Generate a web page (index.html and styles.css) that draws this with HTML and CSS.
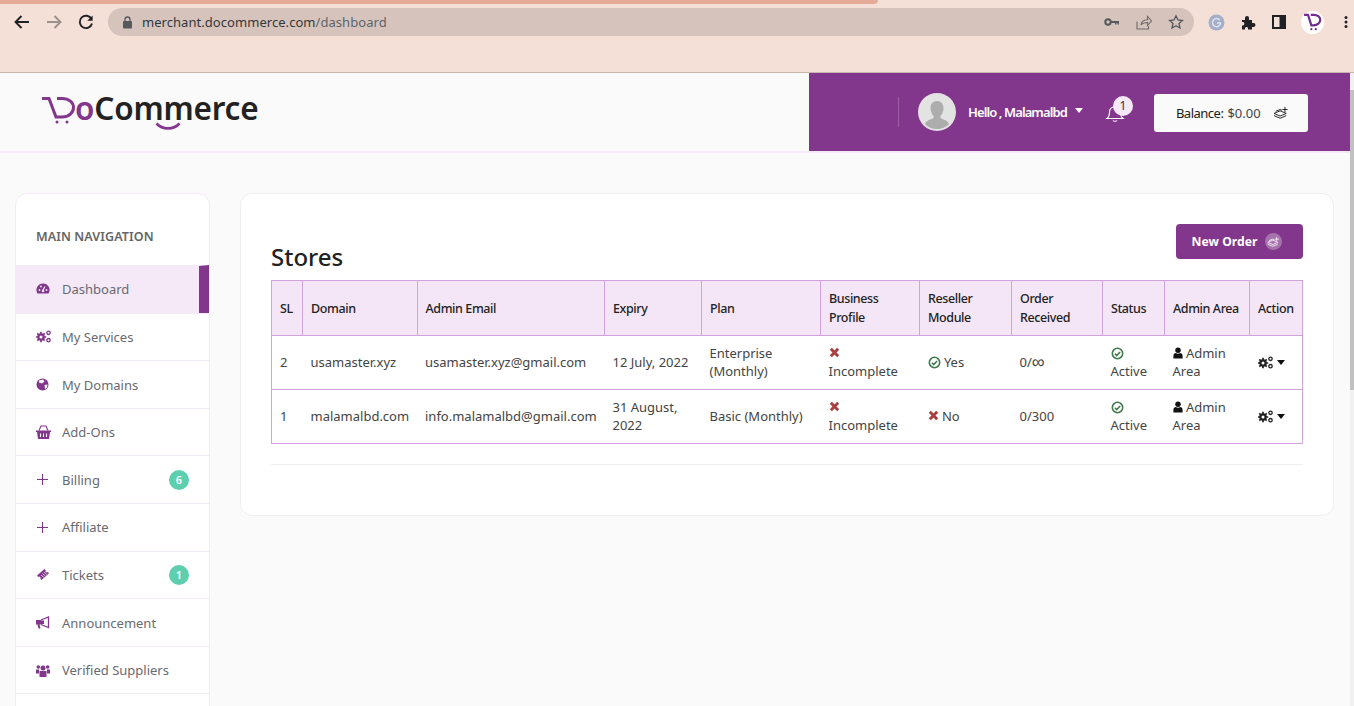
FILE: index.html
```html
<!DOCTYPE html>
<html lang="en">
<head>
    <meta charset="UTF-8">
    <meta name="viewport" content="width=device-width, initial-scale=1.0">
    <title>DoCommerce Dashboard</title>
    <link rel="stylesheet" href="styles.css">
</head>
<body>
    <svg class="defs" width="0" height="0">
        <symbol id="i-gears" viewBox="0 0 15 13">
            <circle cx="5" cy="7" r="2.700" fill="none" stroke="currentColor" stroke-width="2.200"/>
            <path d="M5 1.800v10.400M-.2 7h10.400M1.300 3.300l7.400 7.400M8.700 3.300l-7.400 7.400" stroke="currentColor" stroke-width="1.700"/>
            <circle cx="5" cy="7" r="1.500" fill="#fff"/>
            <circle cx="12.500" cy="2.800" r="1.700" fill="none" stroke="currentColor" stroke-width="1.300"/>
            <circle cx="12.500" cy="10.200" r="1.700" fill="none" stroke="currentColor" stroke-width="1.300"/>
        </symbol>
        <symbol id="i-check" viewBox="0 0 14 14">
            <circle cx="7" cy="7" r="5.600" fill="none" stroke="currentColor" stroke-width="1.700"/>
            <path d="M4.200 7.200l2 2 3.600-3.800" fill="none" stroke="currentColor" stroke-width="1.700"/>
        </symbol>
        <symbol id="i-times" viewBox="0 0 12 12">
            <path d="M2 2l8 8M10 2l-8 8" stroke="currentColor" stroke-width="3.200"/>
        </symbol>
        <symbol id="i-user" viewBox="0 0 12 14">
            <circle cx="6" cy="3.800" r="3.300" fill="currentColor"/>
            <path d="M.5 13.500v-3.200c0-2 1.500-3.300 3-3.300 1.600 1 3.400 1 5 0 1.500 0 3 1.300 3 3.300v3.200z" fill="currentColor"/>
        </symbol>
        <symbol id="i-coins" viewBox="0 0 18 16">
            <path d="M1 8.500l7-3 7 3-7 3zM1 11l7 3 7-3M3 6l5-2 2 .8" fill="none" stroke="currentColor" stroke-width="1.100"/>
            <path d="M13.500 1v6M10.500 4h6" stroke="currentColor" stroke-width="1.100"/>
        </symbol>
    </svg>

    <!-- BROWSER BAR -->
    <div class="browser">
        <div class="tab-strip"><span class="tab-line"></span></div>
        <div class="toolbar">
            <svg width="18" height="16" viewBox="0 0 18 16"><path d="M16 8H3M8.500 2L2.500 8l6 6" fill="none" stroke="#202124" stroke-width="1.900"/></svg>
            <svg width="18" height="16" viewBox="0 0 18 16"><path d="M2 8h13M9.500 2l6 6-6 6" fill="none" stroke="#9b908c" stroke-width="1.900"/></svg>
            <svg width="18" height="18" viewBox="0 0 18 18"><path d="M14.500 6A6.200 6.200 0 1 0 15 10.500" fill="none" stroke="#202124" stroke-width="1.900"/><path d="M15.600 2.500v5.300h-5.300z" fill="#202124"/></svg>
            <div class="address">
                <svg width="11" height="13" viewBox="0 0 11 13"><rect x="1" y="5" width="9" height="7.500" rx="1" fill="#55585c"/><path d="M3 5.500V3.500a2.500 2.500 0 0 1 5 0v2" fill="none" stroke="#55585c" stroke-width="1.300"/></svg>
                <span class="url">merchant.docommerce.com<span class="url-path">/dashboard</span></span>
                <span class="address-icons">
                    <svg width="16" height="10" viewBox="0 0 16 10"><circle cx="4" cy="5" r="2.700" fill="none" stroke="#55585c" stroke-width="2"/><path d="M6.500 4h8.500v3.500h-1.500V6h-1v1.500h-1.500V6H6.500z" fill="#55585c"/></svg>
                    <svg width="16" height="15" viewBox="0 0 16 15"><path d="M1 6.500V14h11.500v-3M5 10c.5-3.500 3-5.300 6.500-5.300V1.500L15.500 6l-4 4.300V7.500C9 7.500 6.500 8 5 10z" fill="none" stroke="#6f6a68" stroke-width="1.100"/></svg>
                    <svg width="16" height="16" viewBox="0 0 16 16"><path d="M8 1.800l1.900 4.200 4.500.5-3.400 3 1 4.500L8 11.700 4 14l1-4.500-3.400-3 4.500-.5z" fill="none" stroke="#55585c" stroke-width="1.300"/></svg>
                </span>
            </div>
            <div class="ext-icons">
                <svg width="17" height="17" viewBox="0 0 17 17"><circle cx="8.500" cy="8.500" r="8" fill="#a3aecb"/><path d="M11.700 6.200A4 4 0 1 0 12.500 9H9" fill="none" stroke="#e2e2ea" stroke-width="1.500"/></svg>
                <svg width="15" height="15" viewBox="0 0 15 15"><path d="M1 5h3V3a2 2 0 0 1 4 0v2h3v3h1.500a2 2 0 0 1 0 4H11v2.500H7V13a1.600 1.600 0 0 0-3 0v1.500H1v-4h1a1.800 1.800 0 0 0 0-3.500H1z" fill="#202124"/></svg>
                <svg width="14" height="14" viewBox="0 0 14 14"><rect width="14" height="14" fill="#202124"/><rect x="2" y="2" width="5.500" height="10" fill="#f5e0d8"/></svg>
                <span class="ext-logo">
                    <svg width="20" height="20" viewBox="0 0 18 18"><path d="M1 2.500h3.500l3 9.500h2c3.500 0 6-2.300 6-5s-2.500-4.500-6-4.500H7" fill="none" stroke="#6f2c91" stroke-width="2"/><circle cx="7.500" cy="15.500" r="1" fill="#6f2c91"/><circle cx="11.500" cy="15.500" r="1" fill="#6f2c91"/></svg>
                </span>
                <svg width="4" height="14" viewBox="0 0 4 14"><circle cx="2" cy="2.500" r="1.500" fill="#202124"/><circle cx="2" cy="7" r="1.500" fill="#202124"/><circle cx="2" cy="11.500" r="1.500" fill="#202124"/></svg>
            </div>
        </div>
    </div>

    <div class="page">
        <div class="page-main">
            <!-- TOP HEADER -->
            <header class="top-header">
                <div class="logo">
                    <svg class="logo-cart" width="33" height="30" viewBox="0 0 33 30">
                        <path d="M0 2.500h7L14 21h6c7 0 11.500-4.500 11.500-9.500S27 2.500 20 2.500h-5" fill="none" stroke="#82368c" stroke-width="3"/>
                        <circle cx="15" cy="26" r="1.500" fill="#82368c"/>
                        <circle cx="25" cy="26" r="1.500" fill="#82368c"/>
                    </svg>
                    <span class="logo-text"><span class="logo-o">o</span>Commerce</span>
                    <svg class="logo-smile" width="26" height="9" viewBox="0 0 26 9"><path d="M1.500 1.500c6 6.500 17 6.500 23 0" fill="none" stroke="#82368c" stroke-width="2.600"/></svg>
                </div>
                <div class="user-bar">
                    <span class="user-sep"></span>
                    <span class="avatar">
                        <svg width="38" height="38" viewBox="0 0 38 38"><path d="M19 8c-4 0-6.500 3-6.500 7 0 3.500 1.500 6 3 8v2c-2 1.500-7 2-8.500 6 3 3.500 7 5 12 5s9-1.500 12-5c-1.500-4-6.500-4.500-8.500-6v-2c1.500-2 3-4.500 3-8 0-4-2.500-7-6.500-7z" fill="#adadad"/></svg>
                    </span>
                    <span class="hello">Hello , Malamalbd</span>
                    <span class="caret caret-white"></span>
                    <span class="bell">
                        <svg width="20" height="20" viewBox="0 0 20 20"><path d="M2 15.500c2-1.500 2.500-3.500 2.500-6.500 0-3 2-5 5.500-5s5.500 2 5.500 5c0 3 .5 5 2.500 6.500zM8 17.500c.8 1 3.200 1 4 0" fill="none" stroke="#fff" stroke-width="1.200"/></svg>
                        <span class="bell-count">1</span>
                    </span>
                    <div class="balance">
                        <span>Balance:</span><span class="balance-amt">$0.00</span>
                        <svg width="16" height="14"><use href="#i-coins"/></svg>
                    </div>
                </div>
            </header>

            <div class="layout">
                <!-- SIDEBAR -->
                <aside class="sidebar">
                    <div class="side-title">MAIN NAVIGATION</div>
                    <a class="side-item active">
                        <svg class="side-icon" width="14" height="14" viewBox="0 0 14 14"><path d="M7 1.500a6.500 6.500 0 0 0-5.500 10h11A6.500 6.500 0 0 0 7 1.500z" fill="currentColor"/><path d="M7 8l2-3.500" stroke="#f5e9f7" stroke-width="1.300"/><circle cx="7" cy="9" r="1.300" fill="#f5e9f7"/><circle cx="3.500" cy="8" r=".9" fill="#f5e9f7"/><circle cx="5" cy="4.500" r=".9" fill="#f5e9f7"/><circle cx="10.500" cy="8" r=".9" fill="#f5e9f7"/></svg>
                        <span>Dashboard</span>
                    </a>
                    <a class="side-item">
                        <svg class="side-icon" width="15" height="13"><use href="#i-gears"/></svg>
                        <span>My Services</span>
                    </a>
                    <a class="side-item">
                        <svg class="side-icon" width="13" height="13" viewBox="0 0 13 13"><circle cx="6.500" cy="6.500" r="6" fill="currentColor"/><path d="M3 2.500l4-1 1.500 2-2.500 2-3-1zM8.500 7l3-.5-.5 3-2 1.500z" fill="#fff"/></svg>
                        <span>My Domains</span>
                    </a>
                    <a class="side-item">
                        <svg class="side-icon" width="15" height="14" viewBox="0 0 15 14"><path d="M0 5.500h15v1.500h-1l-1 7H2L1 7H0z" fill="currentColor"/><path d="M3 5.500L5 1h5l2 4.500" fill="none" stroke="currentColor" stroke-width="1.100"/><path d="M4.500 8.500v3.500M7.500 8.500v3.500M10.500 8.500v3.500" stroke="#fff" stroke-width="1.100"/></svg>
                        <span>Add-Ons</span>
                    </a>
                    <a class="side-item">
                        <svg class="side-icon side-plus" width="11" height="11" viewBox="0 0 11 11"><path d="M5.500 0v11M0 5.500h11" stroke="currentColor" stroke-width="1.100"/></svg>
                        <span>Billing</span>
                        <em class="side-badge">6</em>
                    </a>
                    <a class="side-item">
                        <svg class="side-icon side-plus" width="11" height="11" viewBox="0 0 11 11"><path d="M5.500 0v11M0 5.500h11" stroke="currentColor" stroke-width="1.100"/></svg>
                        <span>Affiliate</span>
                    </a>
                    <a class="side-item">
                        <svg class="side-icon" width="14" height="13" viewBox="0 0 14 13"><path d="M1 7.500L8.500 1l1.300 1.200a1.300 1.300 0 0 0 2 1.800L13 5.200 5.500 12l-1.200-1.200a1.300 1.300 0 0 0-2-1.800z" fill="currentColor"/><path d="M5 7l2.800 2.500M6.500 5.500l2.800 2.500M8 4l2.800 2.500" stroke="#fff" stroke-width=".7"/></svg>
                        <span>Tickets</span>
                        <em class="side-badge">1</em>
                    </a>
                    <a class="side-item">
                        <svg class="side-icon" width="14" height="13" viewBox="0 0 14 13"><path d="M0 4h5v4.500h-1.500l1 4H2.500L1.500 8.500H0z" fill="currentColor"/><path d="M5 4l7.500-3v10.500L5 8.500" fill="none" stroke="currentColor" stroke-width="1.300"/><path d="M5 4.500h3v3.500H5z" fill="currentColor"/></svg>
                        <span>Announcement</span>
                    </a>
                    <a class="side-item">
                        <svg class="side-icon" width="14" height="13" viewBox="0 0 14 13"><circle cx="7" cy="4" r="2.500" fill="currentColor"/><circle cx="2.300" cy="3" r="1.800" fill="currentColor"/><circle cx="11.700" cy="3" r="1.800" fill="currentColor"/><path d="M0 5.500h3v4H0zM11 5.500h3v4h-3zM3.500 7h7v6h-7z" fill="currentColor"/></svg>
                        <span>Verified Suppliers</span>
                    </a>
                    <a class="side-item"></a>
                </aside>

                <!-- STORES CARD -->
                <main class="card">
                    <div class="card-head">
                        <h2>Stores</h2>
                        <a class="btn-new">New Order
                            <span class="btn-coin"><svg width="13" height="12"><use href="#i-coins"/></svg></span>
                        </a>
                    </div>
                    <table class="stores">
                        <colgroup>
                            <col class="c-sl"><col class="c-domain"><col class="c-email"><col class="c-expiry"><col class="c-plan"><col class="c-biz"><col class="c-res"><col class="c-order"><col class="c-status"><col class="c-admin"><col class="c-action">
                        </colgroup>
                        <thead>
                            <tr>
                                <th>SL</th><th>Domain</th><th>Admin Email</th><th>Expiry</th><th>Plan</th><th>Business Profile</th><th>Reseller Module</th><th>Order Received</th><th>Status</th><th>Admin Area</th><th>Action</th>
                            </tr>
                        </thead>
                        <tbody>
                            <tr>
                                <td>2</td>
                                <td>usamaster.xyz</td>
                                <td>usamaster.xyz@gmail.com</td>
                                <td>12 July, 2022</td>
                                <td>Enterprise (Monthly)</td>
                                <td><svg class="ic-x" width="11" height="11"><use href="#i-times"/></svg><br>Incomplete</td>
                                <td><svg class="ic-ok" width="13" height="13"><use href="#i-check"/></svg> Yes</td>
                                <td>0/<span class="inf">∞</span></td>
                                <td><svg class="ic-ok" width="13" height="13"><use href="#i-check"/></svg><br>Active</td>
                                <td><svg class="ic-user" width="10" height="12"><use href="#i-user"/></svg> Admin Area</td>
                                <td><svg class="ic-gear" width="15" height="13"><use href="#i-gears"/></svg><span class="caret"></span></td>
                            </tr>
                            <tr>
                                <td>1</td>
                                <td>malamalbd.com</td>
                                <td>info.malamalbd@gmail.com</td>
                                <td>31 August, 2022</td>
                                <td>Basic (Monthly)</td>
                                <td><svg class="ic-x" width="11" height="11"><use href="#i-times"/></svg><br>Incomplete</td>
                                <td><svg class="ic-x" width="11" height="11"><use href="#i-times"/></svg> No</td>
                                <td>0/300</td>
                                <td><svg class="ic-ok" width="13" height="13"><use href="#i-check"/></svg><br>Active</td>
                                <td><svg class="ic-user" width="10" height="12"><use href="#i-user"/></svg> Admin Area</td>
                                <td><svg class="ic-gear" width="15" height="13"><use href="#i-gears"/></svg><span class="caret"></span></td>
                            </tr>
                        </tbody>
                    </table>
                    <hr class="card-rule">
                </main>
            </div>
        </div>
        <div class="scrollbar"><span class="thumb"></span></div>
    </div>
</body>
</html>
```

FILE: styles.css
```css
/* General */
html, body {
    height: 100%;
    overflow: hidden;
}

body {
    margin: 0;
    font-family: "Noto Sans", sans-serif;
    font-size: 13px;
    color: #3a3a3a;
    background: #fafafa;
    display: flex;
    flex-direction: column;
}

.defs {
    display: block;
    height: 0;
}

a {
    color: inherit;
    text-decoration: none;
}

/* Browser bar */
.browser {
    height: 73px;
    flex: none;
    box-sizing: border-box;
    background: #f5e0d8;
    border-bottom: 1px solid #c9b6af;
}

.tab-strip {
    height: 4px;
    display: flex;
}

.tab-line {
    width: 878px;
    background: #e5ab98;
    border-bottom-right-radius: 6px;
}

.toolbar {
    height: 28px;
    margin-top: 4px;
    padding-left: 13px;
    display: flex;
    align-items: center;
    gap: 14px;
}

.address {
    width: 1086px;
    height: 28px;
    margin-left: -1px;
    box-sizing: border-box;
    padding: 0 10px 0 14px;
    background: #d6c4bc;
    border-radius: 14px;
    display: flex;
    align-items: center;
}

.url {
    margin-left: 9px;
    font-size: 13px;
    letter-spacing: 0.05px;
    color: #33373b;
}

.url-path {
    color: #5f6368;
}

.address-icons {
    margin-left: auto;
    display: flex;
    align-items: center;
    gap: 16px;
}

.ext-icons {
    display: flex;
    align-items: center;
    gap: 16px;
}

.ext-logo {
    width: 23px;
    height: 23px;
    margin: 0 4px 0 -1px;
    border-radius: 50%;
    background: #fff;
    display: flex;
    align-items: center;
    justify-content: center;
}

/* Page */
.page {
    flex: 1;
    display: flex;
    min-height: 0;
}

.page-main {
    flex: 1;
    min-width: 0;
    display: flex;
    flex-direction: column;
}

.scrollbar {
    width: 4px;
    background: #f1f1f1;
    padding-top: 17px;
}

.thumb {
    display: block;
    height: 300px;
    background: #c1c1c1;
}

/* Header */
.top-header {
    height: 78px;
    flex: none;
    display: flex;
    justify-content: space-between;
    background: #fafafa;
    border-bottom: 2px solid #f5e8f7;
}

.logo {
    position: relative;
    display: flex;
    align-items: flex-start;
    padding: 20px 0 0 42px;
}

.logo-cart {
    margin-top: 3px;
}

.logo-text {
    font-size: 31.500px;
    font-weight: 600;
    line-height: 30px;
    letter-spacing: -0.2px;
    color: #222;
}

.logo-o {
    color: #82368c;
}

.logo-smile {
    position: absolute;
    left: 155px;
    top: 49px;
}

.user-bar {
    width: 541px;
    box-sizing: border-box;
    padding-left: 89px;
    background: #82368c;
    display: flex;
    align-items: center;
}

.user-sep {
    width: 1px;
    height: 30px;
    background: #9a5ca3;
}

.avatar {
    width: 38px;
    height: 38px;
    margin-left: 19px;
    border-radius: 50%;
    overflow: hidden;
    background: #e3e3e3;
}

.hello {
    margin-left: 12px;
    font-size: 13px;
    font-weight: 600;
    letter-spacing: -0.9px;
    color: #fff;
}

.caret {
    display: inline-block;
    width: 0;
    height: 0;
    margin-left: 4px;
    vertical-align: 2px;
    border-left: 4.500px solid transparent;
    border-right: 4.500px solid transparent;
    border-top: 5px solid #111;
}

.caret-white {
    margin: -4px 0 0 8px;
    border-top-color: #fff;
}

.bell {
    position: relative;
    width: 20px;
    height: 20px;
    margin-left: 22px;
    margin-top: 2px;
}

.bell-count {
    position: absolute;
    left: 8px;
    top: -7px;
    width: 20px;
    height: 20px;
    border-radius: 50%;
    background: #f5e8f7;
    color: #333;
    font-size: 12px;
    line-height: 20px;
    text-align: center;
}

.balance {
    width: 154px;
    height: 38px;
    margin: 2px 0 0 29px;
    padding-left: 22px;
    box-sizing: border-box;
    background: #fafafa;
    border-radius: 3px;
    display: flex;
    align-items: center;
    font-size: 13px;
    letter-spacing: -0.5px;
    color: #222;
}

.balance-amt {
    margin: 0 12px 0 4px;
    letter-spacing: 0;
    color: #444;
}

/* Main layout */
.layout {
    flex: 1;
    min-height: 0;
    overflow: hidden;
    display: flex;
    align-items: flex-start;
    gap: 30px;
    padding: 40px 16px 0 15px;
}

.sidebar {
    width: 195px;
    flex: none;
    box-sizing: border-box;
    background: #fff;
    border: 1px solid #f5e8f7;
    border-radius: 12px;
}

.side-title {
    height: 71.100px;
    box-sizing: border-box;
    padding: 33px 20px 0;
    font-size: 12.500px;
    font-weight: 600;
    letter-spacing: 0.1px;
    line-height: 20px;
    color: #666;
}

.side-item {
    height: 47.600px;
    box-sizing: border-box;
    padding: 0 20px;
    display: grid;
    grid-template-columns: 26px 1fr auto;
    align-items: center;
    border-top: 1px solid #f5e8f7;
    color: #6a6a72;
}

.side-icon {
    color: #82368c;
}

.side-plus {
    margin-left: 1px;
}

.side-item.active {
    background: #f5e9f7;
    border-right: 10px solid #82368c;
}

.side-badge {
    width: 20px;
    height: 20px;
    border-radius: 50%;
    background: #5dcfae;
    color: #fff;
    font-size: 11px;
    font-style: normal;
    font-weight: 600;
    line-height: 20px;
    text-align: center;
}

/* Stores card */
.card {
    flex: 1;
    min-width: 0;
    height: 323px;
    box-sizing: border-box;
    padding: 30px 30px 0;
    background: #fff;
    border: 1px solid #f1edf3;
    border-radius: 12px;
}

.card-head {
    height: 56px;
    display: flex;
    justify-content: space-between;
    align-items: flex-start;
}

.card-head h2 {
    margin: 18px 0 0;
    font-size: 24px;
    font-weight: 500;
    line-height: 30px;
    color: #222;
}

.btn-new {
    width: 127px;
    height: 35px;
    padding-right: 5px;
    box-sizing: border-box;
    background: #82368c;
    border-radius: 4px;
    display: flex;
    align-items: center;
    justify-content: center;
    gap: 8px;
    font-size: 12.200px;
    font-weight: 700;
    color: #fff;
}

.btn-coin {
    width: 17px;
    height: 17px;
    border-radius: 50%;
    background: #a673ad;
    display: flex;
    align-items: center;
    justify-content: center;
}

.stores {
    width: 1031px;
    table-layout: fixed;
    border-collapse: collapse;
    border: 1px solid #d3a3e0;
}

.c-sl { width: 31px; }
.c-domain { width: 115px; }
.c-email { width: 187px; }
.c-expiry { width: 97px; }
.c-plan { width: 119px; }
.c-biz { width: 99px; }
.c-res { width: 92px; }
.c-order { width: 91px; }
.c-status { width: 62px; }
.c-admin { width: 85px; }
.c-action { width: 53px; }

.stores th,
.stores td {
    padding: 8px;
    text-align: left;
    font-size: 13px;
}

.stores th {
    height: 38px;
    line-height: 19px;
    background: #f4e6f7;
    border: 1px solid #d3a3e0;
    font-size: 12.500px;
    font-weight: 500;
    letter-spacing: -0.4px;
    color: #222;
}

.stores td {
    height: 37px;
    padding-top: 7px;
    padding-bottom: 9px;
    line-height: 18px;
    border-top: 1px solid #d3a3e0;
    color: #444;
}

.stores tr > :nth-child(3) {
    padding-left: 7.500px;
}

.inf {
    font-size: 18px;
    line-height: 1;
    vertical-align: -1px;
}

.ic-x {
    color: #a5403f;
}

.ic-ok {
    color: #3f7a4a;
    vertical-align: -2px;
}

.ic-user {
    color: #111;
    vertical-align: -1px;
}

.ic-gear {
    color: #222;
    vertical-align: -2px;
}

.card-rule {
    margin: 20px 0 0;
    border: 0;
    border-top: 1px solid #f1edf3;
}
```
